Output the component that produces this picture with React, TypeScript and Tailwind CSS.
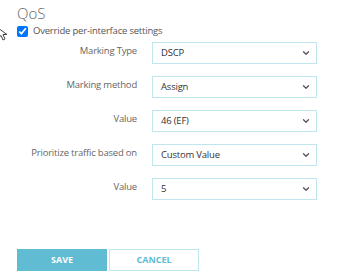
import { ChevronDown } from "lucide-react"

const rows = [
  { label: "Marking Type", value: "DSCP" },
  { label: "Marking method", value: "Assign" },
  { label: "Value", value: "46 (EF)" },
  { label: "Prioritize traffic based on", value: "Custom Value" },
  { label: "Value", value: "5" },
]

function Select({ value }: { value: string }) {
  return (
    <div className="w-[165px] h-[22px] border border-[#bfe6ee] bg-white flex items-center justify-between pl-[8px] pr-[5px] text-[9.5px] tracking-[-0.2px] text-[#333]">
      <span>{value}</span>
      <ChevronDown size={10} strokeWidth={3} className="text-[#555]" />
    </div>
  )
}

export default function App() {
  return (
    <div
      className="relative w-[341px] h-[278px] bg-white overflow-hidden"
      style={{ fontFamily: '"Open Sans", sans-serif' }}>
      {/* cursor peeking in from the left */}
      <svg className="absolute left-[-3px] top-[27px]" width="12" height="14" viewBox="0 0 12 14">
        <path d="M1 1 L1 11 L4 8.5 L6 13 L8 12 L6 7.5 L10 7.5 Z" fill="white" stroke="#444" strokeWidth="1" />
      </svg>

      <div className="pl-[17px] pt-[3px]">
        <div className="text-[15px] font-light text-[#666] leading-[20px]">QoS</div>

        <label className="flex items-center gap-[5px] mt-[2px] h-[12px] text-[9.5px] tracking-[-0.2px] text-[#555] whitespace-nowrap">
          <input type="checkbox" defaultChecked className="w-[11px] h-[11px] m-0" />
          <span>Override per-interface settings</span>
        </label>

        <div className="flex flex-col gap-[12px] mt-[5px]">
          {rows.map((r, i) => (
            <div key={i} className="flex items-center">
              <div className="w-[120px] text-right text-[9.5px] tracking-[-0.2px] text-[#666] whitespace-nowrap -mt-[3px]">
                {r.label}
              </div>
              <div className="ml-[15px]">
                <Select value={r.value} />
              </div>
            </div>
          ))}
        </div>

        <div className="flex gap-[2px] mt-[49px]">
          <button className="w-[90px] h-[22px] bg-[#60bcd3] text-white text-[9px] font-bold">SAVE</button>
          <button className="w-[90px] h-[22px] border border-[#bfe6ee] bg-white text-[#60bcd3] text-[9px] font-bold">
            CANCEL
          </button>
        </div>
      </div>
    </div>
  )
}
